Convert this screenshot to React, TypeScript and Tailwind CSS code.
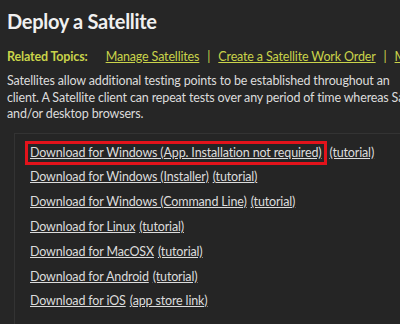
import React from 'react';

const LINKS: { label: string; extra: string; boxed?: boolean }[] = [
  { label: 'Download for Windows (App. Installation not required)', extra: '(tutorial)', boxed: true },
  { label: 'Download for Windows (Installer)', extra: '(tutorial)' },
  { label: 'Download for Windows (Command Line)', extra: '(tutorial)' },
  { label: 'Download for Linux', extra: '(tutorial)' },
  { label: 'Download for MacOSX', extra: '(tutorial)' },
  { label: 'Download for Android', extra: '(tutorial)' },
  { label: 'Download for iOS', extra: '(app store link)' },
];

export default function App() {
  return (
    <div
      className="w-[400px] h-[324px] overflow-hidden bg-[#262626] text-[#dcdcdc] pl-[7px]"
      style={{ fontFamily: 'Lato, "Open Sans", sans-serif' }}
    >
      <h1 className="text-[20px] font-bold tracking-[-0.3px] text-[#f0f0f0] leading-[30px] pt-[6px] whitespace-nowrap">
        Deploy a Satellite
      </h1>

      {/* Related topics */}
      <div className="flex items-center mt-[12px] text-[12.5px] tracking-[-0.15px] leading-[18px] whitespace-nowrap text-[#c9d34a]">
        <span className="font-bold">Related Topics:</span>
        <a className="underline ml-[18px]">Manage Satellites</a>
        <span className="mx-[8px]">|</span>
        <a className="underline">Create a Satellite Work Order</a>
        <span className="mx-[8px]">|</span>
        <a className="underline">Manage Work Orders</a>
      </div>

      <p className="mt-[7px] text-[12.5px] tracking-[-0.15px] leading-[16.5px] whitespace-nowrap">
        Satellites allow additional testing points to be established throughout an
        <br />
        client. A Satellite client can repeat tests over any period of time whereas Satellites
        <br />
        and/or desktop browsers.
      </p>

      {/* Download list */}
      <div className="mt-[10px] ml-[7px] w-[500px] h-[200px] border border-[#333333] bg-[#252525] pl-[15px] pt-[7px]">
        <div className="flex flex-col">
          {LINKS.map((l) => (
            <div key={l.label} className="flex items-center h-[24.8px] text-[12.5px] tracking-[-0.15px] whitespace-nowrap">
              {l.boxed ? (
                <span className="border-[3px] border-[#e3131b] pl-[2px] pr-[3px] leading-[18px] -ml-[5px]">
                  <a className="underline">{l.label}</a>
                </span>
              ) : (
                <a className="underline">{l.label}</a>
              )}
              <a className={`underline ${l.boxed ? 'ml-[2px]' : 'ml-[4px]'}`}>{l.extra}</a>
            </div>
          ))}
        </div>
      </div>
    </div>
  );
}
